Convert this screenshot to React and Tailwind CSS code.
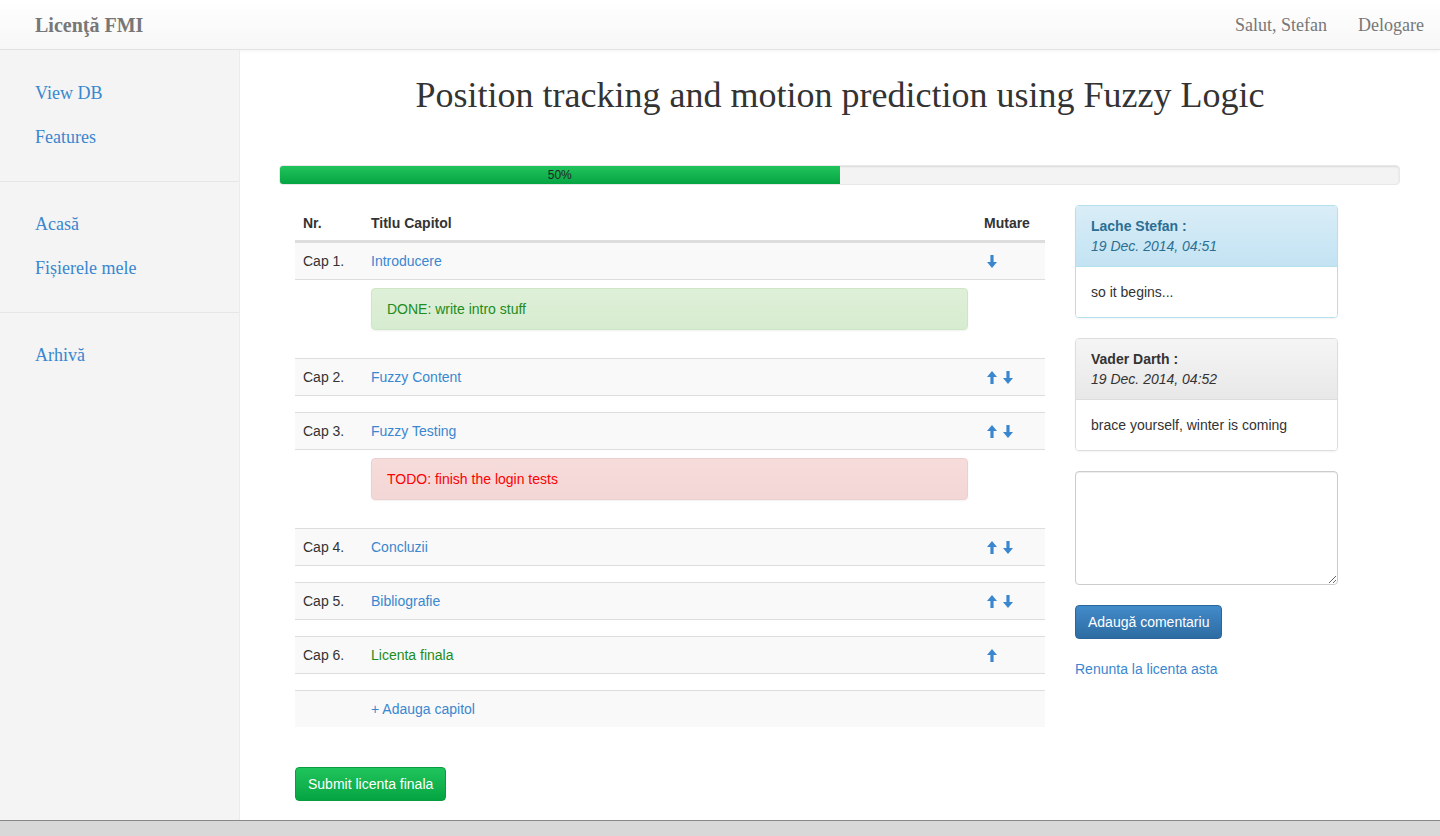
import React from "react";

const serif = { fontFamily: '"Liberation Serif", "Times New Roman", serif' };

function Up() {
  return (
    <svg width="10" height="13" viewBox="0 0 10 13" className="block">
      <path d="M5 0 L10 6 L6.6 6 L6.6 13 L3.4 13 L3.4 6 L0 6 Z" fill="#3a87cf" />
    </svg>
  );
}
function Down() {
  return (
    <svg width="10" height="13" viewBox="0 0 10 13" className="block">
      <path d="M5 13 L10 7 L6.6 7 L6.6 0 L3.4 0 L3.4 7 L0 7 Z" fill="#3a87cf" />
    </svg>
  );
}

function CapRow({ nr, title, up, down, green }) {
  return (
    <div className="flex border-t border-[#ddd] bg-[#f9f9f9] first:border-t-0">
      <div className="w-[68px] p-2 leading-5">{nr}</div>
      <div className="flex-1 p-2 leading-5">
        <span className={green ? "text-[#1c8c1c]" : "text-[#3a87cf]"}>{title}</span>
      </div>
      <div className="w-[69px] pl-[11px] pr-2 py-2 flex items-center gap-[6px] h-[36px]">
        {up ? <Up /> : null}
        {down ? <Down /> : null}
      </div>
    </div>
  );
}

function Spacer() {
  return <div className="border-t border-[#ddd] h-[17px] bg-white" />;
}

function AlertRow({ kind, text }) {
  const cls =
    kind === "ok"
      ? "bg-gradient-to-b from-[#dff0d8] to-[#d6ecd0] border-[#cfe6c4] text-[#218c21]"
      : "bg-gradient-to-b from-[#f7dcdc] to-[#f3d6d6] border-[#ecd0d0] text-[#f00]";
  return (
    <div className="flex border-t border-[#ddd] bg-white">
      <div className="w-[68px]" />
      <div className="flex-1 p-2">
        <div className={`h-[42px] mb-5 rounded border ${cls} px-[15px] leading-5 py-[10px] shadow-[0_1px_2px_rgba(0,0,0,0.06)]`}>
          {text}
        </div>
      </div>
      <div className="w-[69px]" />
    </div>
  );
}

export default function App() {
  return (
    <div
      className="w-[1440px] h-[836px] overflow-hidden flex flex-col bg-white text-[14px] text-[#333]"
      style={{ fontFamily: '"Liberation Sans", Arial, Helvetica, sans-serif' }}
    >
      {/* navbar */}
      <div className="h-[50px] shrink-0 flex items-center justify-between bg-gradient-to-b from-white to-[#f7f7f7] border-b border-[#e2e2e2] shadow-[0_1px_4px_rgba(0,0,0,0.05)]">
        <div style={serif} className="pl-[35px] text-[20px] font-bold text-[#777] leading-none">
          Licenţă FMI
        </div>
        <div style={serif} className="flex items-center text-[18px] text-[#777] leading-none pr-[16px] gap-[31px]">
          <span>Salut, Stefan</span>
          <span>Delogare</span>
        </div>
      </div>

      <div className="flex flex-1 min-h-0">
        {/* sidebar */}
        <div className="w-[240px] shrink-0 bg-[#f4f4f4] border-r border-[#ebebeb]" style={serif}>
          <div className="pt-[21px] pb-[22px] text-[18px] text-[#3a87cf] leading-5">
            <div className="pl-[35px] py-[12px]">View DB</div>
            <div className="pl-[35px] py-[12px]">Features</div>
          </div>
          <div className="border-t border-[#e6e6e6]" />
          <div className="pt-[20px] pb-[22px] text-[18px] text-[#3a87cf] leading-5">
            <div className="pl-[35px] py-[12px]">Acasă</div>
            <div className="pl-[35px] py-[12px]">Fișierele mele</div>
          </div>
          <div className="border-t border-[#e6e6e6]" />
          <div className="pt-[20px] text-[18px] text-[#3a87cf] leading-5">
            <div className="pl-[35px] py-[12px]">Arhivă</div>
          </div>
        </div>

        {/* main */}
        <div className="flex-1 pl-[40px] pr-[40px]">
          <h1 style={serif} className="text-center text-[36px] text-[#333] leading-[40px] pt-[25px]">
            Position tracking and motion prediction using Fuzzy Logic
          </h1>
          <div className="mt-[50px] -ml-px h-[20px] rounded bg-[#f3f3f3] shadow-[inset_0_1px_2px_rgba(0,0,0,0.1)] border border-[#e8e8e8] overflow-hidden flex">
            <div className="w-1/2 h-full bg-gradient-to-b from-[#1fc45c] to-[#04a443] text-[12px] leading-[18px] text-center text-[#222]">
              50%
            </div>
          </div>

          <div className="flex pl-[15px] pt-[20px] gap-[30px]">
            {/* table */}
            <div className="w-[750px] shrink-0">
              <div className="flex font-bold border-b-2 border-[#ddd]">
                <div className="w-[68px] pt-2 pb-[7px] px-2 leading-5">Nr.</div>
                <div className="flex-1 pt-2 pb-[7px] px-2 leading-5">Titlu Capitol</div>
                <div className="w-[69px] pt-2 pb-[7px] px-2 leading-5">Mutare</div>
              </div>
              <CapRow nr="Cap 1." title="Introducere" down />
              <AlertRow kind="ok" text="DONE: write intro stuff" />
              <CapRow nr="Cap 2." title="Fuzzy Content" up down />
              <Spacer />
              <CapRow nr="Cap 3." title="Fuzzy Testing" up down />
              <AlertRow kind="err" text="TODO: finish the login tests" />
              <CapRow nr="Cap 4." title="Concluzii" up down />
              <Spacer />
              <CapRow nr="Cap 5." title="Bibliografie" up down />
              <Spacer />
              <CapRow nr="Cap 6." title="Licenta finala" up green />
              <Spacer />
              <div className="flex border-t border-[#ddd] bg-[#f9f9f9]">
                <div className="w-[68px] p-2 leading-5" />
                <div className="flex-1 p-2 leading-5 text-[#3a87cf]">+ Adauga capitol</div>
              </div>

              <div className="mt-[40px]">
                <button className="h-[34px] px-[12px] rounded border border-[#0a9a3f] bg-gradient-to-b from-[#1fc45c] to-[#04a443] text-white text-[14px] leading-5">
                  Submit licenta finala
                </button>
              </div>
            </div>

            {/* comments */}
            <div className="w-[263px] shrink-0">
              <div className="rounded border border-[#b5e1ef] overflow-hidden shadow-[0_1px_2px_rgba(0,0,0,0.05)]">
                <div className="px-[15px] py-[10px] bg-gradient-to-b from-[#d9edf7] to-[#c3e3f3] border-b border-[#b5e1ef] text-[#2a6f93] leading-5">
                  <div className="font-bold">Lache Stefan :</div>
                  <div className="italic">19 Dec. 2014, 04:51</div>
                </div>
                <div className="p-[15px] leading-5 bg-white">so it begins...</div>
              </div>

              <div className="mt-[20px] rounded border border-[#ddd] overflow-hidden shadow-[0_1px_2px_rgba(0,0,0,0.05)]">
                <div className="px-[15px] py-[10px] bg-gradient-to-b from-[#f5f5f5] to-[#e8e8e8] border-b border-[#ddd] text-[#333] leading-5">
                  <div className="font-bold">Vader Darth :</div>
                  <div className="italic">19 Dec. 2014, 04:52</div>
                </div>
                <div className="p-[15px] leading-5 bg-white">brace yourself, winter is coming</div>
              </div>

              <textarea className="mt-[20px] block w-full h-[114px] rounded border border-[#ccc] shadow-[inset_0_1px_1px_rgba(0,0,0,0.075)] resize-y outline-none" />

              <button className="mt-[20px] h-[34px] px-[12px] rounded border border-[#2b669a] bg-gradient-to-b from-[#428bca] to-[#2d6ca2] text-white text-[14px] leading-5">
                Adaugă comentariu
              </button>

              <div className="mt-[20px] text-[#3a87cf] leading-5">Renunta la licenta asta</div>
            </div>
          </div>
        </div>
      </div>

      <div className="h-[16px] shrink-0 bg-[#d8d8d8] border-t border-[#888]" />
    </div>
  );
}
